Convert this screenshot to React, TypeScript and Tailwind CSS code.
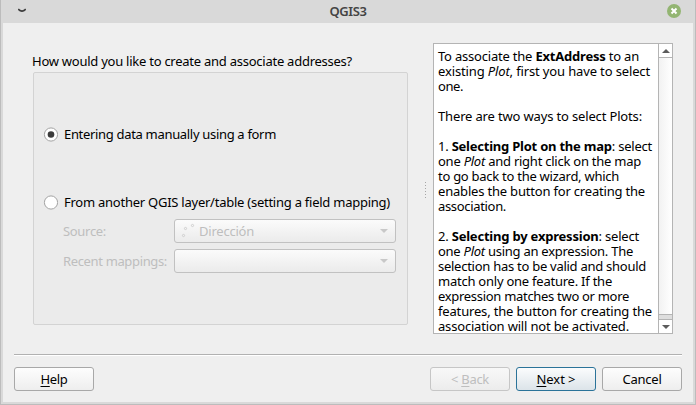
import { useLayoutEffect, useRef, useState, type ReactNode } from "react";

/** One line of text whose tracking is computed so that it fills a given width. */
function Line({ width, className = "", children }: { width: number; className?: string; children?: ReactNode }) {
  const ref = useRef<HTMLSpanElement>(null);
  const [spacing, setSpacing] = useState(0);
  useLayoutEffect(() => {
    const el = ref.current;
    if (!el || !el.textContent) return;
    el.style.letterSpacing = "0px";
    const next = (width - el.getBoundingClientRect().width) / el.textContent.length;
    el.style.letterSpacing = `${next}px`;
    setSpacing(next);
  }, [width]);
  return (
    <div className={`h-[15px] leading-[15px] whitespace-pre ${className}`}>
      <span ref={ref} className="inline-block" style={{ letterSpacing: spacing }}>
        {children}
      </span>
    </div>
  );
}

function Radio({ checked = false }: { checked?: boolean }) {
  return (
    <svg className="-ml-px h-[15px] w-[15px] shrink-0" viewBox="0 0 15 15">
      <circle cx="8" cy="7.5" r="6.600" fill="#fff" stroke="#a3a3a3" />
      {checked && <circle cx="8" cy="7.5" r="3.300" fill="#3b3b3b" />}
    </svg>
  );
}

function Combo({ children }: { children?: ReactNode }) {
  return (
    <div className="flex h-6 w-[222px] items-center rounded-[3px] border border-[#c1c1c1] bg-linear-to-b from-[#fbfbfb] to-[#ebebeb] pr-[7px] pl-[5px]">
      {children}
      <svg className="ml-auto h-1 w-2" viewBox="0 0 8 4">
        <path d="M0 0h8L4 4z" fill="#c8c8c8" />
      </svg>
    </div>
  );
}

function Button({ tone = "normal", children }: { tone?: "normal" | "disabled" | "default"; children: ReactNode }) {
  const tones = {
    normal: "border-[#a8a8a8] from-[#fdfdfd] to-[#eeeeee] text-black",
    disabled: "border-[#c6c6c6] from-[#f8f8f8] to-[#ececec] text-[#bebebe]",
    default: "border-[#2b7399] from-[#fbfcfd] to-[#dce4e9] text-black",
  };
  return (
    <button className={`flex h-6 w-20 items-center justify-center rounded-[3px] border bg-linear-to-b ${tones[tone]}`}>
      {children}
    </button>
  );
}

function Key({ children }: { children: ReactNode }) {
  return <span className="underline decoration-1 underline-offset-[2px]">{children}</span>;
}

export default function App() {
  return (
    <div className="flex h-[405px] w-[696px] flex-col border-x border-b border-[#bcbcbc] bg-[#d9d9d9] px-[2px] pb-[2px] font-['Noto_Sans',sans-serif] text-[13px] text-black">
      <header className="flex h-[23px] shrink-0 items-center justify-between pr-[12px] pl-[15px]">
        <svg className="-mt-[2px] h-[5px] w-[8px]" viewBox="0 0 8 5">
          <path d="M.3 1L2 2.600Q4 3.800 6 2.600L7.700 1" fill="none" stroke="#3e3e3e" strokeWidth="1.700" />
        </svg>
        <Line width={37} className="pl-[3px] font-semibold text-[#444]">QGIS3</Line>
        <svg className="-mt-px h-[14px] w-[14px]" viewBox="0 0 14 14">
          <circle cx="7" cy="7" r="7" fill="#93b572" />
          <path d="M4.500 4.500l5 5m0-5l-5 5" stroke="#fff" strokeWidth="2" />
        </svg>
      </header>

      <main className="flex min-h-0 flex-1 flex-col bg-[#efefef] px-[11px]">
        <div className="flex h-[331px] shrink-0 pt-5">
          <section className="w-[394px] pt-[11px] pl-[18px]">
            <Line width={320}>How would you like to create and associate addresses?</Line>
            <div className="mt-[3px] ml-px h-[253px] w-[375px] rounded-[2px] border border-[#d3d3d3] bg-[#ebebeb] pt-[54px] pl-[10px]">
              <label className="flex h-[15px] items-center gap-[6px]">
                <Radio checked />
                <Line width={212}>Entering data manually using a form</Line>
              </label>
              <label className="mt-[53px] flex h-[15px] items-center gap-[6px]">
                <Radio />
                <Line width={326}>From another QGIS layer/table (setting a field mapping)</Line>
              </label>
              <div className="mt-[9px] grid grid-cols-[111px_222px] items-center gap-y-[6px] pl-[19px] text-[#bebebe]">
                <Line width={43}>Source:</Line>
                <Combo>
                  <svg className="mr-[3px] h-4 w-4" viewBox="0 0 16 16" fill="none" stroke="#cfcfcf">
                    <circle cx="12.500" cy="2.500" r="1.100" />
                    <circle cx="5.500" cy="5.500" r="1.100" />
                    <circle cx="3.500" cy="12.500" r="1.100" />
                  </svg>
                  <Line width={55}>Dirección</Line>
                </Combo>
                <Line width={104}>Recent mappings:</Line>
                <Combo />
              </div>
            </div>
          </section>

          <div className="flex w-[25px] flex-col items-end gap-[2px] pt-[139px]">
            {[0, 1, 2, 3, 4, 5].map((dot) => (
              <i key={dot} className="mr-[7px] h-px w-px bg-[#a6a6a6]" />
            ))}
          </div>

          <section className="flex h-[291px] w-[240px] border border-[#b4b4b4] bg-white">
            <div className="w-[224px] pt-[5px] pl-[4px]">
              <Line width={201}>To associate the <b>ExtAddress</b> to an</Line>
              <Line width={212}>existing <i>Plot</i>, first you have to select</Line>
              <Line width={25}>one.</Line>
              <Line width={0} />
              <Line width={204}>There are two ways to select Plots:</Line>
              <Line width={0} />
              <Line width={214}>1. <b>Selecting Plot on the map</b>: select</Line>
              <Line width={203}>one <i>Plot</i> and right click on the map</Line>
              <Line width={181}>to go back to the wizard, which</Line>
              <Line width={207}>enables the button for creating the</Line>
              <Line width={68}>association.</Line>
              <Line width={0} />
              <Line width={201}>2. <b>Selecting by expression</b>: select</Line>
              <Line width={195}>one <i>Plot</i> using an expression. The</Line>
              <Line width={208}>selection has to be valid and should</Line>
              <Line width={174}>match only one feature. If the</Line>
              <Line width={191}>expression matches two or more</Line>
              <Line width={214}>features, the button for creating the</Line>
              <Line width={191}>association will not be activated.</Line>
            </div>
            <div className="flex w-[14px] flex-col border-l border-[#b4b4b4]">
              <div className="flex h-[13px] shrink-0 items-center justify-center">
                <svg className="h-1 w-2" viewBox="0 0 8 4"><path d="M0 4h8L4 0z" fill="#5c5c5c" /></svg>
              </div>
              <div className="h-[258px] shrink-0 border-y border-[#b4b4b4] bg-linear-to-r from-[#f2f2f2] to-white" />
              <div className="h-[4px] shrink-0 bg-[#dedede]" />
              <div className="flex min-h-0 flex-1 items-center justify-center border-t border-[#b4b4b4]">
                <svg className="h-1 w-2" viewBox="0 0 8 4"><path d="M0 0h8L4 4z" fill="#5c5c5c" /></svg>
              </div>
            </div>
          </section>
        </div>

        <div className="h-[2px] w-[668px] shrink-0 border-t border-b border-t-[#b1b1b1] border-b-white" />
        <footer className="mt-[11px] flex gap-[6px]">
          <Button><Line width={27}><Key>H</Key>elp</Line></Button>
          <div className="ml-auto" />
          <Button tone="disabled"><Line width={38}>&lt; <Key>B</Key>ack</Line></Button>
          <Button tone="default"><Line width={39}><Key>N</Key>ext &gt;</Line></Button>
          <Button><Line width={39}>Cancel</Line></Button>
        </footer>
      </main>
    </div>
  );
}
